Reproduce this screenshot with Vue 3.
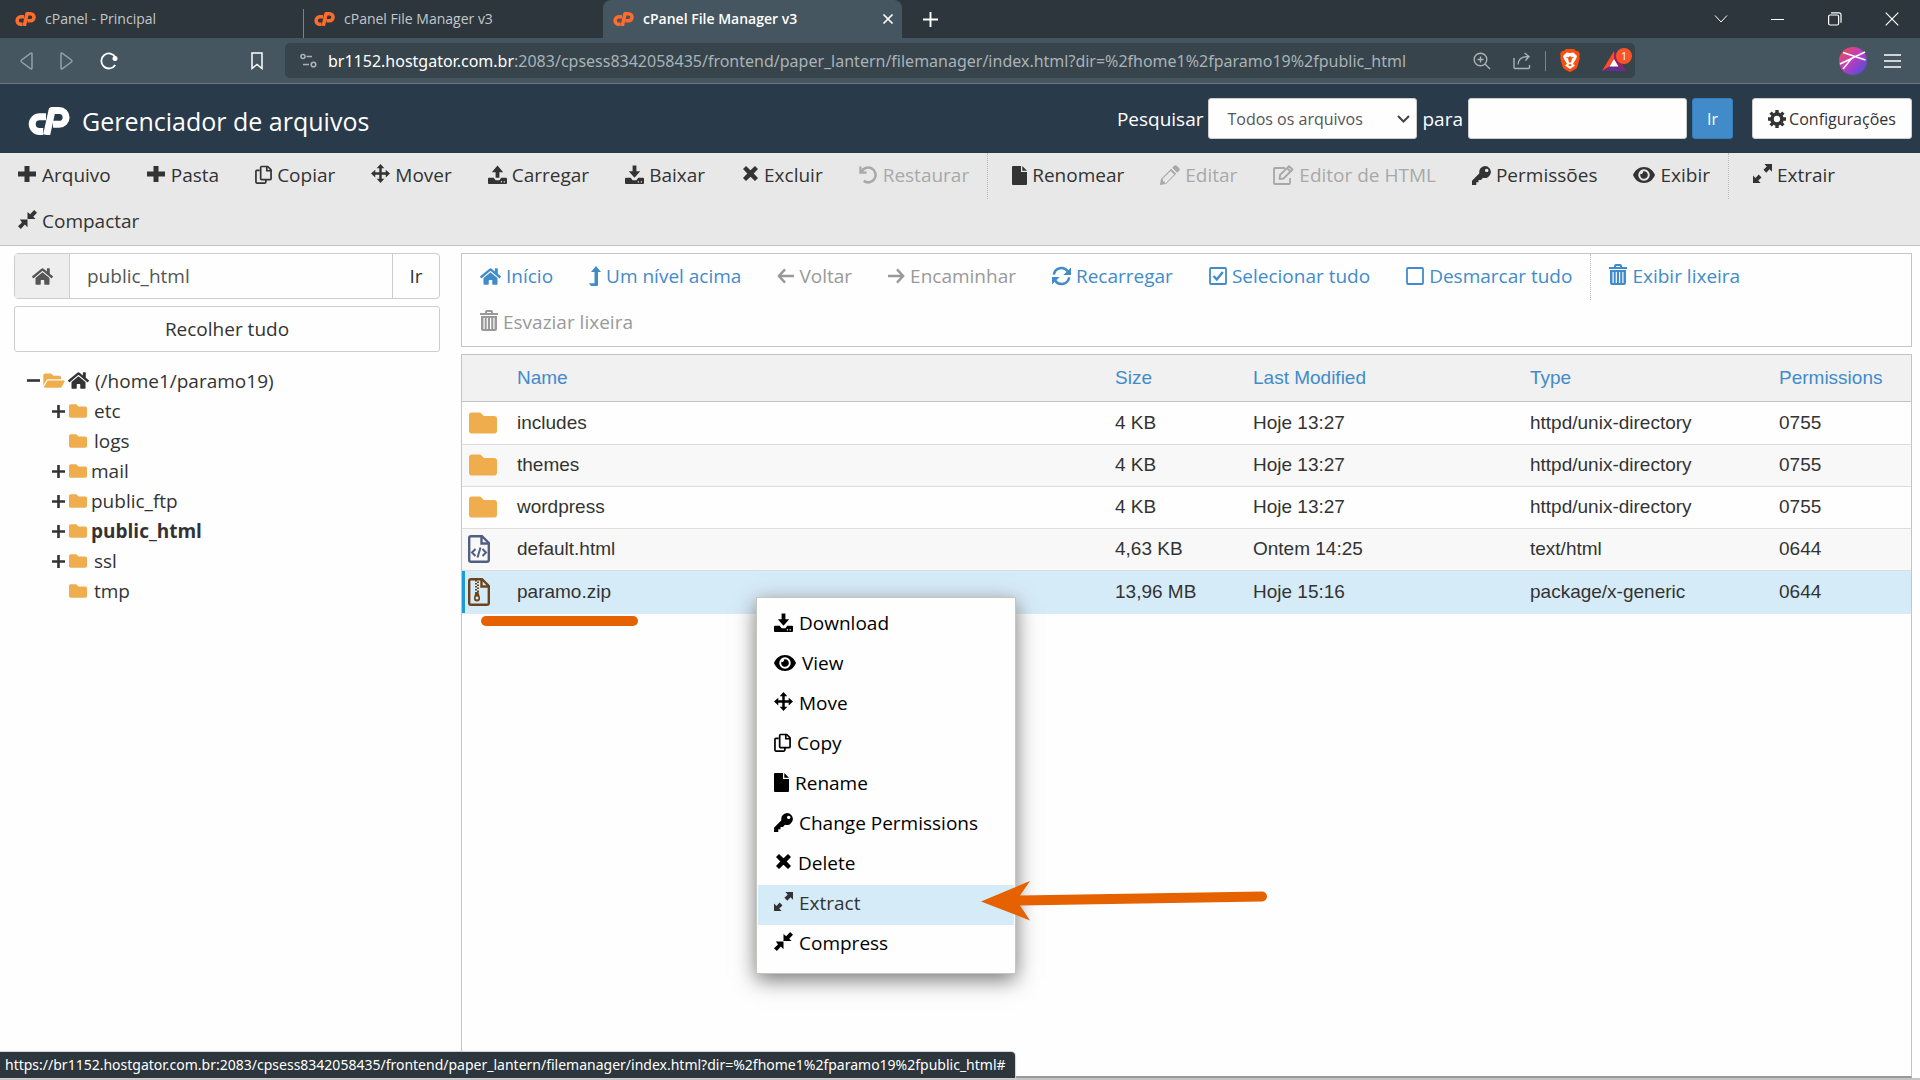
<script setup>
import { h, ref } from 'vue'

const cpMark = '<g fill="none" stroke="currentColor" stroke-width="7" stroke-linejoin="round"><path d="M18 9.7h-6.4a7.4 7.4 0 0 0 0 14.8h3.6"/><path d="M18.6 28 24 3.5h7.2a6.9 6.9 0 0 1 0 13.8H25"/></g>'
const trayBody = '<path fill-rule="evenodd" d="M1 13h5l2 2.500h4l2-2.500h5q1 0 1 1v4.500q0 1-1 1H1q-1 0-1-1V14q0-1 1-1zm12.500 3.500v1.300h1.300v-1.300zm3 0v1.300h1.300v-1.300z"/>'
const trashBody = '<path fill-rule="evenodd" d="M5 2q0-2 2-2h4q2 0 2 2v1h5v2H0V3h5zm2 0v1h4V2z"/><path fill-rule="evenodd" d="M1 6h16v13q0 2-2 2H3q-2 0-2-2zm2.500 2v11h1.200V8zm3.200 0v11h1.200V8zm3.300 0v11h1.200V8zm3.300 0v11h1.200V8z"/>'

// name: [width, height, viewBox, shapes]
const icons = {
  cp: [21, 14, '0 0 42 28', cpMark],
  cpLarge: [42, 28, '0 0 42 28', cpMark],
  plus: [19, 20, '0 0 19 20', '<path d="M6.500 1h5v5.500H18v5h-6.500V17h-5v-5.500H0v-5h6.500z"/>'],
  copy: [17, 20, '0 0 18 20', '<g fill="none" stroke="currentColor" stroke-width="1.800" stroke-linejoin="round"><path d="M5 5H2q-1 0-1 1v11.500q0 1 1 1h8.500q1 0 1-1V15"/><path d="M6 2q0-1 1-1h6.500L17 4.500V14q0 1-1 1H7q-1 0-1-1z"/><path d="M12.500 1v4.500H17"/></g>'],
  move: [19, 22, '0 0 20 23', '<path d="M10 0l4 4.500h-2.700v4.200h4.200V6L20 10l-4.500 4v-2.700h-4.200v4.200H14L10 20l-4-4.500h2.700v-4.200H4.500V14L0 10l4.500-4v2.700h4.200V4.500H6z"/>'],
  upload: [19, 20, '0 0 20 20', '<path d="M10 0l6 7h-4v6H8V7H4z"/>' + trayBody],
  download: [19, 20, '0 0 20 20', '<path d="M8 0h4v6h4l-6 7-6-7h4z"/>' + trayBody],
  close: [18, 20, '-1 0 18 20', '<path d="M1 4 4 1l4.500 4.300L13 1l3 3-4.300 4.500L16 13l-3 3-4.500-4.300L4 16l-3-3 4.300-4.500z"/>'],
  undo: [19, 20, '0 0 20 20', '<path d="M1.500 1v6.500H8" fill="none" stroke="currentColor" stroke-width="2.400"/><path d="M2.500 7A7.800 7.800 0 1 1 5 16.200" fill="none" stroke="currentColor" stroke-width="2.700"/>'],
  file: [15, 19, '0 0 15 19', '<path d="M1 0h8v6h6v12q0 1-1 1H1q-1 0-1-1V1q0-1 1-1zm9.300 0L15 4.800h-4.700z"/>'],
  pencil: [20, 20, '0 0 20 20', '<path fill-rule="evenodd" d="M14 1q1.500-1.500 3 0l2 2q1.500 1.500 0 3l-1.800 1.800-5-5zM11.200 3.800l5 5L6 19l-6 1 1-6zM3 15v1.600h1.700v1.800l1-.200 8.500-8.600-3.500-3.600L2.500 14z"/>'],
  edit: [21, 20, '0 0 21 20', '<g fill="none" stroke="currentColor" stroke-width="1.800" stroke-linejoin="round"><path d="M12 3H2q-1 0-1 1v14q0 1 1 1h14q1 0 1-1v-5"/><path d="M7 10 16 1.200l3.500 3.300L10.500 13.500 6.500 14z"/><path d="m14 3 3.500 3.500"/></g>'],
  key: [19, 19, '0 0 19 19', '<path fill-rule="evenodd" d="M13 0a6 6 0 1 1-2 11.700L9 14H6.500v2.300H4.300V19H0v-4.200l7.400-7.500A6 6 0 0 1 13 0zm1.700 2.700a1.700 1.700 0 1 0 .01 0z"/>'],
  eye: [22, 16, '0 0 22 16', '<path fill-rule="evenodd" d="M11 0c5 0 9 3 11 8-2 5-6 8-11 8S2 13 0 8c2-5 6-8 11-8zm0 2.300a5.700 5.700 0 1 0 .01 0z"/><path d="M11 4.200a3.800 3.800 0 1 1-3.600 2.600 1.900 1.900 0 0 0 2.500-2.400z"/>'],
  expand: [19, 22, '0 0 20 23', '<path d="M12 0h8v8l-2.600-2.600L14 9l-3-3 3.500-3.400zM0 20v-8l2.600 2.600L6 11l3 3-3.500 3.400L8 20z"/>'],
  compress: [19, 22, '0 0 20 23', '<path d="M17 0l3 2.800-4 4.200 2.500 2.500H10V2l2.800 2.500zM0 17l4.200-4L2 10h8v8l-2.800-2.700L3 20z"/>'],
  home: [21, 19, '0 0 576 512', '<path d="M280.370 148.260L96 300.110V464a16 16 0 0 0 16 16l112.060-.290a16 16 0 0 0 15.920-16V368a16 16 0 0 1 16-16h64a16 16 0 0 1 16 16v95.640a16 16 0 0 0 16 16.050L464 480a16 16 0 0 0 16-16V300L295.670 148.260a12.190 12.190 0 0 0-15.300 0zM571.600 251.470L488 182.560V44.050a12 12 0 0 0-12-12h-56a12 12 0 0 0-12 12v72.610L318.470 43a48 48 0 0 0-61 0L4.340 251.470a12 12 0 0 0-1.600 16.900l25.500 31A12 12 0 0 0 45.150 301l235.220-193.740a12.190 12.190 0 0 1 15.300 0L530.900 301a12 12 0 0 0 16.900-1.600l25.500-31a12 12 0 0 0-1.700-16.930z"/>'],
  folder: [20, 18, '0 0 512 512', '<path d="M464 128H272l-64-64H48C21.490 64 0 85.490 0 112v288c0 26.510 21.490 48 48 48h416c26.510 0 48-21.490 48-48V176c0-26.510-21.490-48-48-48z"/>'],
  folderLarge: [30, 28, '0 0 512 512', '<path d="M464 128H272l-64-64H48C21.490 64 0 85.490 0 112v288c0 26.510 21.490 48 48 48h416c26.510 0 48-21.490 48-48V176c0-26.510-21.490-48-48-48z"/>'],
  folderOpen: [22, 19, '0 0 576 512', '<path d="M572.694 292.093L500.270 416.248A63.997 63.997 0 0 1 444.989 448H45.025c-18.523 0-30.064-20.093-20.731-36.093l72.424-124.155A64 64 0 0 1 152 256h399.964c18.523 0 30.064 20.093 20.730 36.093zM152 224h328v-48c0-26.510-21.490-48-48-48H272l-64-64H48C21.490 64 0 85.490 0 112v278.046l69.077-118.418C86.214 242.250 117.989 224 152 224z"/>'],
  levelUp: [12, 20, '0 0 12 20', '<path d="M7 0l5 6H9v13q0 1-1 1H2l-2-2.700h5.500V6H2z"/>'],
  left: [17, 16, '0 0 18 16', '<path d="M8.500 1 2 8l6.500 7M2 8h16" fill="none" stroke="currentColor" stroke-width="2.600"/>'],
  right: [17, 16, '0 0 18 16', '<path d="M9.500 1 16 8l-6.500 7M16 8H0" fill="none" stroke="currentColor" stroke-width="2.600"/>'],
  sync: [19, 20, '0 0 20 20', '<g fill="none" stroke="currentColor" stroke-width="2.600"><path d="M2 8.500A8 8 0 0 1 16.500 5"/><path d="M18 11.500A8 8 0 0 1 3.500 15"/></g><path d="M20 1v8h-8zM0 19v-8h8z"/>'],
  check: [18, 18, '0 0 18 18', '<rect x="1" y="1" width="16" height="16" rx="1" fill="none" stroke="currentColor" stroke-width="1.800"/><path d="m4.500 9 3.300 3.500L13.800 5" fill="none" stroke="currentColor" stroke-width="2.400"/>'],
  square: [18, 18, '0 0 18 18', '<rect x="1" y="1" width="16" height="16" rx="1" fill="none" stroke="currentColor" stroke-width="1.800"/>'],
  trash: [18, 24, '0 0 18 24', trashBody],
  gear: [18, 18, '0 0 18 18', '<circle cx="9" cy="9" r="5" fill="none" stroke="currentColor" stroke-width="3.600"/><path d="M9 0v3M9 15v3M0 9h3M15 9h3M2.600 2.600l2 2M13.400 13.400l2 2M15.400 2.600l-2 2M4.600 13.400l-2 2" stroke="currentColor" stroke-width="3.400"/>'],
  codeFile: [22, 28, '0 0 22 28', '<g fill="none" stroke="currentColor" stroke-width="2.400"><path d="M3 1.200h11l6.800 6.800v17q0 1.800-2 1.800H3q-1.800 0-1.800-1.800V3q0-1.800 1.800-1.800z"/><path d="M13.500 1v7.500H21"/><path d="m7.500 14-3.500 3.500L7.500 21M14.500 14l3.500 3.500-3.500 3.500M12.500 12.500l-3 10" stroke-width="2"/></g>'],
  zipFile: [22, 28, '0 0 22 28', '<g fill="none" stroke="currentColor" stroke-width="2.400"><path d="M3 1.200h11l6.800 6.800v17q0 1.800-2 1.800H3q-1.800 0-1.800-1.800V3q0-1.800 1.800-1.800z"/><path d="M13.500 1v7.500H21"/><path d="M8 2v14" stroke-width="2" stroke-dasharray="1.500 1.500"/><path d="M10 3.500v12" stroke-width="2" stroke-dasharray="1.500 1.500"/></g><path fill-rule="evenodd" d="M7.500 14h3l1.500 5.500q.500 4-3 4t-3-4zM9 18.500a1.500 1.500 0 1 0 .01 0z"/>'],
  toggleOpen: [13, 13, '0 0 13 13', '<path d="M0 5.200h13v2.600H0z"/>'],
  toggleClosed: [13, 13, '0 0 13 13', '<path d="M5.200 0h2.600v5.200H13v2.600H7.800V13H5.200V7.800H0V5.200h5.200z"/>'],
  back: [13, 18, '0 0 13 18', '<path d="M10.500 1.300q1.500-.900 1.500.700v14q0 1.600-1.500.700L1.600 10q-1.100-1 0-2z" fill="none" stroke="currentColor" stroke-width="1.500"/>'],
  forward: [13, 18, '0 0 13 18', '<path d="M2.500 1.300Q1 .400 1 2v14q0 1.600 1.500.700l8.900-6.700q1.100-1 0-2z" fill="none" stroke="currentColor" stroke-width="1.500"/>'],
  reload: [18, 18, '0 0 18 18', '<path d="M15.500 5.500A7.500 7.500 0 1 0 15.200 13" fill="none" stroke="currentColor" stroke-width="1.800"/><circle cx="15" cy="6.500" r="2.500"/>'],
  bookmark: [14, 18, '0 0 14 18', '<path d="M2 1h10v15.500l-5-4-5 4z" fill="none" stroke="currentColor" stroke-width="1.500"/>'],
  tune: [17, 16, '0 0 17 16', '<g fill="none" stroke="currentColor" stroke-width="1.600"><circle cx="3" cy="3.500" r="2"/><path d="M6.500 3.500H12M3 11.500h6"/><circle cx="13.500" cy="11.500" r="2.300"/></g>'],
  zoomIn: [18, 18, '0 0 18 18', '<g fill="none" stroke="currentColor" stroke-width="1.400"><circle cx="7.500" cy="7.500" r="6.300"/><path d="m12 12 5 5M4.500 7.500h6M7.500 4.500v6"/></g>'],
  share: [18, 18, '0 0 18 18', '<g fill="none" stroke="currentColor" stroke-width="1.400"><path d="M1 6v9.500q0 1 1 1h13.500q1 0 1-1V13"/><path d="M5 12.500q.500-8 10-8M11.500 1 16 4.500l-3.500 4"/></g>'],
  brave: [20, 23, '0 0 20 23', '<path fill="#fb4f0e" d="M6 0h8l2 2 2-.200 2 3.200-.700 2 .500 2-2.500 9Q17 20 10 23 3 20 2.700 18L.200 9l.500-2L0 5l2-3.200L4 2z"/><path fill="#fff" fill-rule="evenodd" d="M10 4l3.500-.500L17 7l-.800 2.500L13 15l2 1.500-5 3.500-5-3.500L7 15 3.800 9.500 3 7l3.500-3.500zM5.500 8 8 9.500l1 4h2l1-4L14.500 8l-3 .300L10 7l-1.500 1.300zM8 16l2 1.500 2-1.500-2-1z"/>'],
  bat: [24, 20, '0 0 24 20', '<path fill="#ff4b26" d="M12 0 0 20l7.500-4.500L12 8z"/><path fill="#9e1f63" d="m12 0 12 20-7.500-4.500L12 8z"/><path fill="#662d91" d="m0 20 7.500-4.500h9L24 20z"/><path fill="#fff" d="m12 8 4.500 7.500h-9z"/>'],
  menu: [17, 14, '0 0 17 14', '<path d="M0 1h17M0 7h17M0 13h17" stroke="currentColor" stroke-width="1.600"/>'],
  tabClose: [12, 12, '0 0 12 12', '<path d="m1.500 1.500 9 9m0-9-9 9" stroke="currentColor" stroke-width="1.700"/>'],
  newTab: [15, 15, '0 0 15 15', '<path d="M7.500 0v15M0 7.500h15" stroke="currentColor" stroke-width="1.900"/>'],
  chevron: [14, 8, '0 0 14 8', '<path d="m1 .500 6 6.500 6-6.500" fill="none" stroke="currentColor"/>'],
  minimize: [13, 13, '0 0 13 13', '<path d="M0 6.500h13" stroke="currentColor"/>'],
  restore: [14, 14, '0 0 14 14', '<g fill="none" stroke="currentColor" stroke-width="1.200"><rect x=".600" y="3" width="10" height="10" rx="1.500"/><path d="M3 .800h8q2 0 2 2v8"/></g>'],
  quit: [14, 14, '0 0 14 14', '<path d="m.700.700 12.600 12.600m0-12.600L.700 13.300" stroke="currentColor" stroke-width="1.200"/>'],
  selectArrow: [13, 8, '0 0 13 8', '<path d="m1 1 5.500 5.500L12 1" fill="none" stroke="currentColor" stroke-width="2"/>'],
  avatar: [28, 28, '0 0 28 28', '<defs><linearGradient id="avatarFill" x1="0" y1="0" x2="1" y2="1"><stop offset="0" stop-color="#f0503c"/><stop offset=".450" stop-color="#c23cbe"/><stop offset="1" stop-color="#3a4fe0"/></linearGradient></defs><circle cx="14" cy="14" r="14" fill="url(#avatarFill)"/><path d="M1 17 26 5M4 5.500l22.500 7.500M13 11l-9 11" stroke="#fff" stroke-width="1.500"/>'],
}

const Icon = ({ name }) => {
  const [width, height, viewBox, innerHTML] = icons[name]
  return h('svg', { class: 'icon', width, height, viewBox, fill: 'currentColor', 'aria-hidden': 'true', innerHTML })
}
Icon.props = ['name']

const host = 'br1152.hostgator.com.br'
const path = ':2083/cpsess8342058435/frontend/paper_lantern/filemanager/index.html?dir=%2fhome1%2fparamo19%2fpublic_html'

const tabs = [
  { title: 'cPanel - Principal' },
  { title: 'cPanel File Manager v3' },
  { title: 'cPanel File Manager v3', active: true },
]

const tools = [
  { icon: 'plus', label: 'Arquivo' },
  { icon: 'plus', label: 'Pasta' },
  { icon: 'copy', label: 'Copiar' },
  { icon: 'move', label: 'Mover' },
  { icon: 'upload', label: 'Carregar' },
  { icon: 'download', label: 'Baixar' },
  { icon: 'close', label: 'Excluir' },
  { icon: 'undo', label: 'Restaurar', off: true, last: true },
  { icon: 'file', label: 'Renomear', first: true },
  { icon: 'pencil', label: 'Editar', off: true },
  { icon: 'edit', label: 'Editor de HTML', off: true },
  { icon: 'key', label: 'Permissões' },
  { icon: 'eye', label: 'Exibir', last: true },
  { icon: 'expand', label: 'Extrair', first: true },
  { icon: 'compress', label: 'Compactar' },
]

const actions = [
  { icon: 'home', label: 'Início' },
  { icon: 'levelUp', label: 'Um nível acima' },
  { icon: 'left', label: 'Voltar', off: true },
  { icon: 'right', label: 'Encaminhar', off: true },
  { icon: 'sync', label: 'Recarregar' },
  { icon: 'check', label: 'Selecionar tudo' },
  { icon: 'square', label: 'Desmarcar tudo', last: true },
  { icon: 'trash', label: 'Exibir lixeira' },
  { icon: 'trash', label: 'Esvaziar lixeira', off: true },
]

const tree = [
  { name: 'etc', children: true, spaced: true },
  { name: 'logs', spaced: true },
  { name: 'mail', children: true },
  { name: 'public_ftp', children: true },
  { name: 'public_html', children: true, current: true },
  { name: 'ssl', children: true, spaced: true },
  { name: 'tmp', spaced: true },
]

const files = [
  { icon: 'folderLarge', name: 'includes', size: '4 KB', date: 'Hoje 13:27', type: 'httpd/unix-directory', mode: '0755' },
  { icon: 'folderLarge', name: 'themes', size: '4 KB', date: 'Hoje 13:27', type: 'httpd/unix-directory', mode: '0755' },
  { icon: 'folderLarge', name: 'wordpress', size: '4 KB', date: 'Hoje 13:27', type: 'httpd/unix-directory', mode: '0755' },
  { icon: 'codeFile', name: 'default.html', size: '4,63 KB', date: 'Ontem 14:25', type: 'text/html', mode: '0644' },
  { icon: 'zipFile', name: 'paramo.zip', size: '13,96 MB', date: 'Hoje 15:16', type: 'package/x-generic', mode: '0644', selected: true },
]

const menuItems = [
  { icon: 'download', label: 'Download' },
  { icon: 'eye', label: 'View' },
  { icon: 'move', label: 'Move' },
  { icon: 'copy', label: 'Copy' },
  { icon: 'file', label: 'Rename' },
  { icon: 'key', label: 'Change Permissions' },
  { icon: 'close', label: 'Delete' },
  { icon: 'expand', label: 'Extract', hover: true },
  { icon: 'compress', label: 'Compress' },
]

const folderPath = ref('public_html')
const query = ref('')
</script>

<template>
  <div class="window">
    <header class="tabs">
      <div v-for="(tab, i) in tabs" :key="i" class="tab" :class="{ active: tab.active }">
        <Icon name="cp" class="favicon" />
        <span class="tab-title">{{ tab.title }}</span>
        <button v-if="tab.active" class="plain" aria-label="Close tab"><Icon name="tabClose" /></button>
      </div>
      <button class="plain new-tab" aria-label="New tab"><Icon name="newTab" /></button>
      <div class="window-controls">
        <button class="plain" aria-label="Search tabs"><Icon name="chevron" /></button>
        <button class="plain" aria-label="Minimize"><Icon name="minimize" /></button>
        <button class="plain" aria-label="Restore"><Icon name="restore" /></button>
        <button class="plain" aria-label="Close"><Icon name="quit" /></button>
      </div>
    </header>

    <nav class="browser-bar">
      <div class="history">
        <button class="plain dim" aria-label="Back"><Icon name="back" /></button>
        <button class="plain dim" aria-label="Forward"><Icon name="forward" /></button>
        <button class="plain" aria-label="Reload"><Icon name="reload" /></button>
        <button class="plain bookmark" aria-label="Bookmark"><Icon name="bookmark" /></button>
      </div>
      <div class="address">
        <Icon name="tune" />
        <span class="url"><span class="host">{{ host }}</span>{{ path }}</span>
        <button class="plain" aria-label="Zoom"><Icon name="zoomIn" /></button>
        <button class="plain" aria-label="Share"><Icon name="share" /></button>
        <span class="divider"></span>
        <button class="plain" aria-label="Shields"><Icon name="brave" /></button>
        <button class="plain rewards" aria-label="Rewards"><Icon name="bat" /><span class="badge">1</span></button>
      </div>
      <div class="profile">
        <button class="plain" aria-label="Profile"><Icon name="avatar" /></button>
        <button class="plain" aria-label="Menu"><Icon name="menu" /></button>
      </div>
    </nav>

    <div class="app-header">
      <div class="brand">
        <Icon name="cpLarge" />
        <h1>Gerenciador de arquivos</h1>
      </div>
      <form class="search" @submit.prevent>
        <label for="scope">Pesquisar</label>
        <span class="select-wrap">
          <select id="scope"><option>Todos os arquivos</option></select>
          <Icon name="selectArrow" />
        </span>
        <label for="query">para</label>
        <input id="query" v-model="query" type="text" />
        <button type="submit" class="go">Ir</button>
      </form>
      <button class="settings"><Icon name="gear" />Configurações</button>
    </div>

    <div class="toolbar">
      <button v-for="tool in tools" :key="tool.label" class="tool" :class="{ off: tool.off, first: tool.first, last: tool.last }" :disabled="tool.off">
        <Icon :name="tool.icon" />{{ tool.label }}
      </button>
    </div>

    <main>
      <aside>
        <form class="path" @submit.prevent>
          <button type="button" class="path-home" aria-label="Home"><Icon name="home" /></button>
          <input v-model="folderPath" type="text" aria-label="Folder" />
          <button type="submit" class="path-go">Ir</button>
        </form>
        <button class="collapse">Recolher tudo</button>
        <ul class="tree">
          <li class="root">
            <Icon name="toggleOpen" /><Icon name="folderOpen" class="amber" /><Icon name="home" />
            <span>(/home1/paramo19)</span>
          </li>
          <li v-for="node in tree" :key="node.name" :class="{ leaf: !node.children, current: node.current, spaced: node.spaced }">
            <Icon v-if="node.children" name="toggleClosed" /><Icon name="folder" class="amber" />
            <span>{{ node.name }}</span>
          </li>
        </ul>
      </aside>

      <section class="content">
        <div class="actions">
          <a v-for="action in actions" :key="action.label" href="#" class="tool" :class="{ off: action.off, last: action.last }">
            <Icon :name="action.icon" />{{ action.label }}
          </a>
        </div>
        <div class="listing">
          <table>
            <colgroup>
              <col class="c-icon" /><col /><col class="c-size" /><col class="c-date" /><col class="c-type" /><col class="c-mode" />
            </colgroup>
            <thead>
              <tr><th></th><th>Name</th><th>Size</th><th>Last Modified</th><th>Type</th><th>Permissions</th></tr>
            </thead>
            <tbody>
              <tr v-for="file in files" :key="file.name" :class="{ selected: file.selected }">
                <td class="glyph" :class="file.icon"><Icon :name="file.icon" /></td>
                <td>{{ file.name }}</td>
                <td>{{ file.size }}</td>
                <td>{{ file.date }}</td>
                <td>{{ file.type }}</td>
                <td>{{ file.mode }}</td>
              </tr>
            </tbody>
          </table>
          <div class="underline"></div>
          <ul class="context-menu">
            <li v-for="item in menuItems" :key="item.label">
              <button :class="{ hover: item.hover }"><Icon :name="item.icon" />{{ item.label }}</button>
            </li>
          </ul>
          <svg class="arrow" width="288" height="42" viewBox="0 0 288 42" aria-hidden="true">
            <path fill="#e66100" d="M0 21.500 49 1 39 15.500 281 11.500a5 5 0 0 1 0 10L39 25.500 49 40.500z" />
          </svg>
        </div>
      </section>
    </main>
    <footer></footer>
    <div class="status">https://{{ host }}{{ path }}#</div>
  </div>
</template>

<style>
body {
  margin: 0;
  background: #fefefe;
}
</style>

<style scoped>
* {
  box-sizing: border-box;
}
.window {
  position: relative;
  display: flex;
  flex-direction: column;
  min-height: 100vh;
  font-family: "Open Sans", "Noto Sans", sans-serif;
  font-size: 19px;
  color: #333;
}
.icon {
  display: block;
  flex: none;
}
button,
input,
select {
  font: inherit;
  color: inherit;
  margin: 0;
}
.plain {
  display: flex;
  align-items: center;
  justify-content: center;
  padding: 0;
  border: 0;
  background: none;
}

/* browser frame */
.tabs {
  display: flex;
  height: 38px;
  background: #2c363c;
  color: #fff;
  font-size: 14px;
}
.tab {
  display: flex;
  align-items: center;
  width: 299px;
  padding: 0 8px 0 10px;
  color: #c3c8cb;
}
.tab:first-child {
  width: 304px;
  padding-left: 15px;
  background: linear-gradient(#78838a, #78838a) right bottom / 1px 29px no-repeat;
}
.tab.active {
  background: #455660;
  border-radius: 8px 8px 0 0;
  color: #fff;
  font-weight: 600;
}
.favicon {
  color: #ff6c2c;
}
.tab-title {
  flex: 1;
  margin-left: 9px;
  padding-bottom: 2px;
}
.new-tab {
  margin-left: 21px;
}
.window-controls {
  display: flex;
  margin-left: auto;
}
.window-controls .plain {
  width: 57px;
}
.browser-bar {
  display: flex;
  align-items: center;
  height: 46px;
  border-bottom: 1px solid #687780;
  background: #455660;
  color: #fff;
}
.history {
  display: flex;
  align-items: center;
  gap: 27px;
  width: 285px;
  padding: 0 21px 0 20px;
}
.dim {
  color: #93a0a7;
}
.bookmark {
  margin-left: auto;
}
.address {
  position: relative;
  display: flex;
  flex: 1;
  align-items: center;
  height: 35px;
  min-width: 0;
  padding: 0 9px 0 15px;
  border-radius: 5px;
  background: #38444b;
  color: #a9b2b7;
  font-family: "Noto Sans", "Open Sans", sans-serif;
  font-size: 16px;
}
.url {
  flex: 1;
  min-width: 0;
  margin-left: 11px;
  overflow: hidden;
  white-space: nowrap;
}
.host {
  color: #fff;
}
.address .plain {
  color: #a9b2b7;
  margin-left: 22px;
}
.divider {
  width: 1px;
  height: 20px;
  margin: 0 -8px 0 14px;
  background: #7b868c;
}
.rewards {
  position: relative;
}
.address .badge {
  position: absolute;
  top: -3px;
  right: -6px;
  width: 16px;
  height: 16px;
  border-radius: 50%;
  background: #fb542b;
  color: #fff;
  font-size: 10px;
  line-height: 16px;
  text-align: center;
}
.profile {
  display: flex;
  align-items: center;
  justify-content: flex-end;
  gap: 17px;
  width: 285px;
  padding-right: 19px;
}

/* application header */
.app-header {
  display: flex;
  align-items: center;
  height: 69px;
  padding: 0 8px 0 28px;
  background: #293a4a;
  color: #fff;
}
.brand {
  display: flex;
  align-items: center;
  gap: 12px;
  margin-right: auto;
  padding-top: 5px;
}
h1 {
  margin: 0;
  font-size: 25px;
  font-weight: 400;
}
.search {
  display: flex;
  align-items: center;
  gap: 5px;
  margin-right: 19px;
}
.search input,
.select-wrap select,
.go,
.settings {
  height: 41px;
  border: 1px solid #ccc;
  border-radius: 3px;
  background: #fefefe;
  color: #333;
  font-size: 16px;
}
.select-wrap {
  position: relative;
  color: #444;
}
.select-wrap select {
  display: block;
  width: 209px;
  padding: 0 18px;
  color: #555;
  appearance: none;
}
.select-wrap .icon {
  position: absolute;
  right: 7px;
  top: 17px;
}
.search input {
  width: 219px;
}
.search .go {
  width: 41px;
  padding: 0;
  border-color: #357ebd;
  background: #428bca;
  color: #fff;
}
.settings {
  display: flex;
  align-items: center;
  justify-content: center;
  gap: 3px;
  width: 160px;
  padding: 0;
}

/* tool rows */
.toolbar,
.actions {
  display: flex;
  flex-wrap: wrap;
}
.toolbar {
  height: 93px;
  border-bottom: 1px solid #c4c4c4;
  background: #e8e8e8;
}
.tool {
  display: flex;
  align-items: center;
  gap: 5px;
  height: 46px;
  padding: 0 18px 2px;
  border: 0;
  background: none;
  color: #333;
  line-height: 44px;
  text-decoration: none;
  white-space: nowrap;
}
.tool.off {
  color: #a8a8a8;
}
.tool.last {
  border-right: 1px dotted #bbb;
}
.tool.first {
  padding-left: 24px;
}

/* folder sidebar */
main {
  display: flex;
  flex: 1;
  padding: 7px 8px 0 14px;
}
aside {
  width: 426px;
  margin-right: 21px;
}
.path {
  display: flex;
  height: 46px;
  border: 1px solid #ccc;
  border-radius: 4px;
}
.path-home,
.path-go {
  padding: 0;
  border: 0;
  background: none;
}
.path-home {
  display: flex;
  align-items: center;
  justify-content: center;
  width: 55px;
  border-right: 1px solid #ccc;
  background: #eee;
  color: #555;
}
.path input {
  flex: 1;
  min-width: 0;
  padding: 0 17px;
  border: 0;
  background: none;
  color: #555;
}
.path-go {
  width: 47px;
  border-left: 1px solid #ccc;
}
.collapse {
  display: block;
  width: 100%;
  height: 46px;
  margin-top: 7px;
  padding: 0;
  border: 1px solid #ccc;
  border-radius: 3px;
  background: #fefefe;
}
.tree {
  margin: 13px 0 0;
  padding: 0 0 0 38px;
  list-style: none;
}
.tree li {
  display: flex;
  align-items: center;
  gap: 3px;
  height: 30px;
}
.tree .root {
  margin-left: -25px;
  height: 31px;
}
.tree .leaf {
  padding-left: 16px;
}
.tree .root span,
.tree .spaced span {
  margin-left: 3px;
}
.tree .current {
  font-weight: 700;
}
.amber {
  color: #f0ad4e;
}

/* file listing */
.content {
  display: flex;
  flex: 1;
  flex-direction: column;
  min-width: 0;
}
.actions {
  height: 94px;
  border: 1px solid #c4c4c4;
}
.actions .tool {
  color: #428bca;
}
.actions .off {
  color: #999;
}
.listing {
  position: relative;
  flex: 1;
  margin-top: 7px;
  border: 1px solid #c4c4c4;
  border-bottom: 2px solid #999;
}
table {
  width: 100%;
  border-collapse: collapse;
  table-layout: fixed;
  font-family: "Liberation Sans", Arial, sans-serif;
}
.c-icon {
  width: 55px;
}
.c-size {
  width: 138px;
}
.c-date {
  width: 277px;
}
.c-type {
  width: 249px;
}
.c-mode {
  width: 132px;
}
th,
td {
  height: 42px;
  padding: 0;
  border-bottom: 1px solid #ddd;
  text-align: left;
  font-weight: 400;
}
th {
  height: 46px;
  border-color: #c4c4c4;
  background: #f1f1f1;
  color: #428bca;
}
tbody tr:first-child td,
tbody tr:last-child td {
  height: 43px;
}
tbody tr:nth-child(even) {
  background: #f8f8f8;
}
tbody .selected {
  background: #d6ebf8;
}
.selected td {
  border-color: #d6ebf8;
}
.glyph {
  padding-left: 6px;
}
.selected .glyph {
  box-shadow: inset 3px 0 #1e9bd7;
}
.folderLarge {
  color: #f0ad4e;
}
.codeFile {
  color: #525d82;
}
.zipFile {
  color: #6b431c;
}
.underline {
  position: absolute;
  top: 261px;
  left: 19px;
  width: 157px;
  height: 10px;
  border-radius: 5px;
  background: #e66100;
}
.context-menu {
  position: absolute;
  top: 242px;
  left: 294px;
  width: 260px;
  margin: 0;
  padding: 7px 1px 8px;
  border: 1px solid #c6c6be;
  background: #fefefe;
  box-shadow: 0 6px 20px #777;
  list-style: none;
}
.context-menu button {
  display: flex;
  align-items: center;
  gap: 6px;
  width: 100%;
  height: 40px;
  padding: 0 16px 5px;
  border: 0;
  background: none;
  color: #000;
}
.context-menu .hover {
  background: #d6ebf8;
  color: #333;
}
.arrow {
  position: absolute;
  top: 525px;
  left: 519px;
}
footer {
  height: 2px;
  background: #c4c4c4;
}
.status {
  position: absolute;
  bottom: 2px;
  left: 0;
  height: 26px;
  padding: 0 9px 0 5px;
  border-radius: 0 4px 0 0;
  background: #2c363c;
  box-shadow: 0 0 1px 1px #d0d0d0;
  color: #fff;
  font-family: "Noto Sans", "Open Sans", sans-serif;
  font-size: 14px;
  line-height: 26px;
  white-space: nowrap;
}
</style>
